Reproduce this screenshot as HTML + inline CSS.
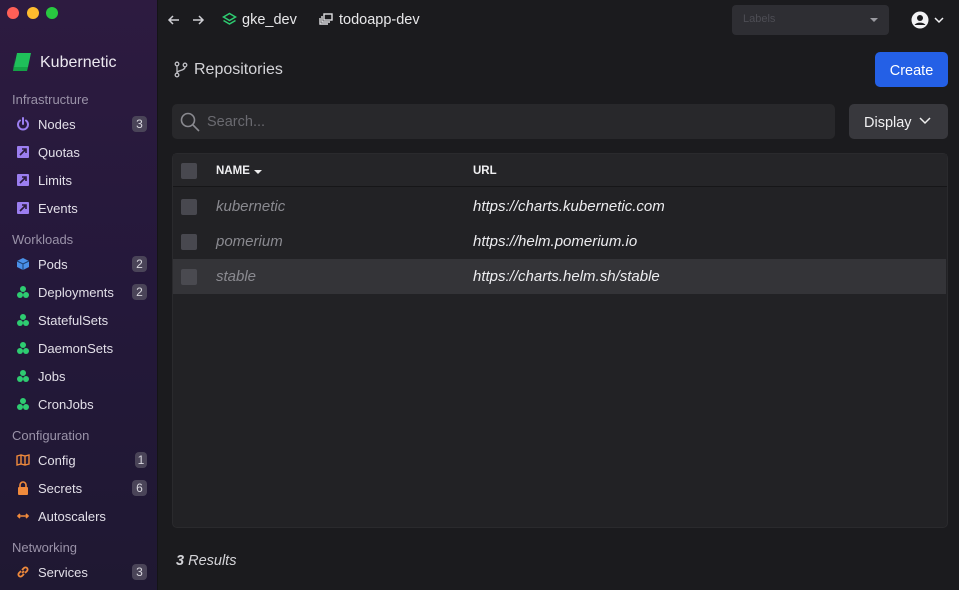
<!DOCTYPE html><html><head><style>
*{margin:0;padding:0;box-sizing:border-box}
body{width:959px;height:590px;overflow:hidden;background:#1b1b1e;font-family:"Liberation Sans",sans-serif;position:relative;color:#e8e8ea}
.sb{position:absolute;left:0;top:0;width:158px;height:590px;background:linear-gradient(180deg,#2d1b40 0%,#24183a 50%,#1f1832 100%);border-right:1px solid #141416}
.dot{position:absolute;top:7px;width:12px;height:12px;border-radius:50%}
.abs{position:absolute}
.sec{position:absolute;left:12px;font-size:13px;color:#9a92a8}
.it{position:absolute;left:16px;font-size:13px;color:#e2dfe8;display:flex;align-items:center;height:16px}
.it .ic{width:14px;height:14px;margin-right:8px;display:inline-block}
.bd{position:absolute;right:10px;width:15px;height:16px;border-radius:4px;background:#4a4458;color:#d8d6de;font-size:12px;text-align:center;line-height:16px}
.ch{position:absolute;left:181px;width:16px;height:16px;border-radius:2px;background:#48484f}
.row{position:absolute;left:173px;width:773px;height:35px;font-style:italic;font-size:15px}
</style></head><body>
<div class="sb">
<div class="dot" style="left:7px;background:#fe5f57"></div>
<div class="dot" style="left:27px;background:#febc2e"></div>
<div class="dot" style="left:46px;background:#28c840"></div>
<svg class="abs" style="left:12px;top:52px" width="22" height="22" viewBox="0 0 22 22"><path d="M5 1h14l-3 14H2z" fill="#1fc05a"/><path d="M3 5l-2 14h14l1-4H2z" fill="#14a347"/></svg>
<div class="abs" style="left:40px;top:54px;font-size:16px;color:#ece9f0">Kubernetic</div>
<div class="sec" style="top:92px">Infrastructure</div>
<div class="it" style="top:116px"><svg class="ic" viewBox="0 0 14 14"><path d="M4 3.5A5 5 0 1 0 10 3.5M7 1v6" stroke="#9b7ef0" stroke-width="2" fill="none" stroke-linecap="round"/></svg>Nodes</div><div class="bd" style="top:116px">3</div>
<div class="it" style="top:144px"><svg class="ic" viewBox="0 0 14 14"><rect x="1" y="1" width="12" height="12" rx="1" fill="#9b7ef0"/><path d="M4 10l5-5M6 4h4v4" stroke="#2a1a3a" stroke-width="1.6" fill="none"/></svg>Quotas</div>
<div class="it" style="top:172px"><svg class="ic" viewBox="0 0 14 14"><rect x="1" y="1" width="12" height="12" rx="1" fill="#9b7ef0"/><path d="M4 10l5-5M6 4h4v4" stroke="#2a1a3a" stroke-width="1.6" fill="none"/></svg>Limits</div>
<div class="it" style="top:200px"><svg class="ic" viewBox="0 0 14 14"><rect x="1" y="1" width="12" height="12" rx="1" fill="#9b7ef0"/><path d="M4 10l5-5M6 4h4v4" stroke="#2a1a3a" stroke-width="1.6" fill="none"/></svg>Events</div>
<div class="sec" style="top:232px">Workloads</div>
<div class="it" style="top:256px"><svg class="ic" viewBox="0 0 14 14"><path d="M7 1l6 3v6l-6 3-6-3V4z" fill="#4a90e8"/><path d="M1 4l6 3 6-3M7 7v6" stroke="#1d3f70" stroke-width="1" fill="none"/></svg>Pods</div><div class="bd" style="top:256px">2</div>
<div class="it" style="top:284px"><svg class="ic" viewBox="0 0 14 14" fill="#2ecc71"><circle cx="7" cy="4" r="3"/><circle cx="4" cy="10" r="3"/><circle cx="10" cy="10" r="3"/></svg>Deployments</div><div class="bd" style="top:284px">2</div>
<div class="it" style="top:312px"><svg class="ic" viewBox="0 0 14 14" fill="#2ecc71"><circle cx="7" cy="4" r="3"/><circle cx="4" cy="10" r="3"/><circle cx="10" cy="10" r="3"/></svg>StatefulSets</div>
<div class="it" style="top:340px"><svg class="ic" viewBox="0 0 14 14" fill="#2ecc71"><circle cx="7" cy="4" r="3"/><circle cx="4" cy="10" r="3"/><circle cx="10" cy="10" r="3"/></svg>DaemonSets</div>
<div class="it" style="top:368px"><svg class="ic" viewBox="0 0 14 14" fill="#2ecc71"><circle cx="7" cy="4" r="3"/><circle cx="4" cy="10" r="3"/><circle cx="10" cy="10" r="3"/></svg>Jobs</div>
<div class="it" style="top:396px"><svg class="ic" viewBox="0 0 14 14" fill="#2ecc71"><circle cx="7" cy="4" r="3"/><circle cx="4" cy="10" r="3"/><circle cx="10" cy="10" r="3"/></svg>CronJobs</div>
<div class="sec" style="top:428px">Configuration</div>
<div class="it" style="top:452px"><svg class="ic" viewBox="0 0 14 14"><path d="M1 3l4-1 4 1 4-1v9l-4 1-4-1-4 1z M5 2v9M9 3v9" stroke="#f08a3c" stroke-width="1.4" fill="none"/></svg>Config</div><div class="bd" style="top:452px;width:12px">1</div>
<div class="it" style="top:480px"><svg class="ic" viewBox="0 0 14 14"><path d="M4 6V4a3 3 0 0 1 6 0v2" stroke="#f08a3c" stroke-width="1.6" fill="none"/><rect x="2" y="6" width="10" height="8" rx="1" fill="#f08a3c"/></svg>Secrets</div><div class="bd" style="top:480px">6</div>
<div class="it" style="top:508px"><svg class="ic" viewBox="0 0 14 14"><path d="M2 7h10M4 5L2 7l2 2M10 5l2 2-2 2" stroke="#f08a3c" stroke-width="1.6" fill="none"/></svg>Autoscalers</div>
<div class="sec" style="top:540px">Networking</div>
<div class="it" style="top:564px"><svg class="ic" viewBox="0 0 14 14"><path d="M6 8l2-2M5 6L3 8a2 2 0 0 0 3 3l2-2M9 8l2-2a2 2 0 0 0-3-3L6 5" stroke="#f08a3c" stroke-width="1.8" fill="none"/></svg>Services</div><div class="bd" style="top:564px">3</div>
</div>
<svg class="abs" style="left:167px;top:13px" width="40" height="14" viewBox="0 0 40 14" stroke="#cfcfd4" stroke-width="1.5" fill="none"><path d="M12 7H2M6 3L2 7l4 4M26 7h10M32 3l4 4-4 4"/></svg>
<svg class="abs" style="left:222px;top:12px" width="15" height="15" viewBox="0 0 15 15" stroke="#2ecc71" stroke-width="1.5" fill="none"><path d="M7.5 1.5l6 3.5-6 3.5-6-3.5z M1.5 8.5l6 3.5 6-3.5"/></svg>
<div class="abs" style="left:242px;top:12px;font-size:14.5px;color:#e8e8ea">gke_dev</div>
<svg class="abs" style="left:318px;top:12px" width="16" height="15" viewBox="0 0 16 15" stroke="#e0e0e4" stroke-width="1.4" fill="none"><rect x="6" y="2" width="8" height="6"/><path d="M4 4v6h8M2 6v6h8"/></svg>
<div class="abs" style="left:339px;top:12px;font-size:14.5px;color:#e8e8ea">todoapp-dev</div>
<div class="abs" style="left:732px;top:5px;width:157px;height:30px;background:#2e2e33;border-radius:4px"><span class="abs" style="left:11px;top:8px;font-size:11px;color:#4d4d54">Labels</span><span class="abs" style="left:138px;top:13px;border:4px solid transparent;border-top:4px solid #9a9aa0;border-bottom:0"></span></div>
<svg class="abs" style="left:911px;top:11px" width="36" height="18" viewBox="0 0 36 18"><circle cx="9" cy="9" r="8.5" fill="#f2f2f4"/><circle cx="9" cy="7" r="3" fill="#1b1b1e"/><path d="M3.5 14a6 4 0 0 1 11 0" fill="#1b1b1e"/><path d="M24 7l4 4 4-4" stroke="#f2f2f4" stroke-width="1.5" fill="none"/></svg>
<svg class="abs" style="left:174px;top:61px" width="14" height="17" viewBox="0 0 14 17" stroke="#bdbdc2" stroke-width="1.3" fill="none"><circle cx="3" cy="3" r="1.8"/><circle cx="3" cy="14" r="1.8"/><circle cx="11" cy="4" r="1.8"/><path d="M3 5v7M11 6c0 4-8 3-8 6"/></svg>
<div class="abs" style="left:194px;top:61px;font-size:16px;color:#d4d4d8">Repositories</div>
<div class="abs" style="left:875px;top:52px;width:73px;height:35px;background:#2460e6;border-radius:5px;color:#fff;font-size:14.5px;text-align:center;line-height:35px;padding-top:2px">Create</div>
<div class="abs" style="left:172px;top:104px;width:663px;height:35px;background:#28282b;border-radius:5px"></div>
<svg class="abs" style="left:180px;top:112px" width="20" height="20" viewBox="0 0 20 20" stroke="#8a8a90" stroke-width="1.6" fill="none"><circle cx="8" cy="8" r="6.5"/><path d="M13 13l6 6"/></svg>
<div class="abs" style="left:207px;top:114px;font-size:14.5px;color:#6a6a70">Search...</div>
<div class="abs" style="left:849px;top:104px;width:99px;height:35px;background:#38383d;border-radius:5px;color:#f0f0f2;font-size:14.5px;line-height:35px;padding-left:15px;padding-top:2px">Display</div>
<svg class="abs" style="left:919px;top:117px" width="12" height="8" viewBox="0 0 12 8" stroke="#eee" stroke-width="1.5" fill="none"><path d="M1 1l5 5 5-5"/></svg>
<div class="abs" style="left:172px;top:153px;width:776px;height:375px;background:#222225;border-radius:5px;border:1px solid #2a2a2d"></div>
<div class="abs" style="left:173px;top:154px;width:774px;height:33px;background:#252528;border-bottom:1px solid #161618"></div>
<div class="ch" style="top:163px"></div>
<div class="abs" style="left:216px;top:165px;font-size:11.5px;font-weight:bold;color:#f0f0f2">NAME</div>
<span class="abs" style="left:254px;top:170px;border:4px solid transparent;border-top:4px solid #eee;border-bottom:0"></span>
<div class="abs" style="left:473px;top:165px;font-size:11.5px;font-weight:bold;color:#f0f0f2">URL</div>
<div class="row" style="top:189px"><div class="ch" style="left:8px;top:10px"></div><span class="abs" style="left:43px;top:9px;color:#8a8a90">kubernetic</span><span class="abs" style="left:300px;top:9px;color:#ececef">https://charts.kubernetic.com</span></div>
<div class="row" style="top:224px"><div class="ch" style="left:8px;top:10px"></div><span class="abs" style="left:43px;top:9px;color:#8a8a90">pomerium</span><span class="abs" style="left:300px;top:9px;color:#ececef">https://helm.pomerium.io</span></div>
<div class="row" style="top:259px;background:#343438"><div class="ch" style="left:8px;top:10px;background:#4a4a50"></div><span class="abs" style="left:43px;top:9px;color:#8a8a90">stable</span><span class="abs" style="left:300px;top:9px;color:#ececef">https://charts.helm.sh/stable</span></div>
<div class="abs" style="left:176px;top:553px;font-size:14.5px;color:#d4d4d8;font-style:italic"><b>3</b> Results</div>
</body></html>
